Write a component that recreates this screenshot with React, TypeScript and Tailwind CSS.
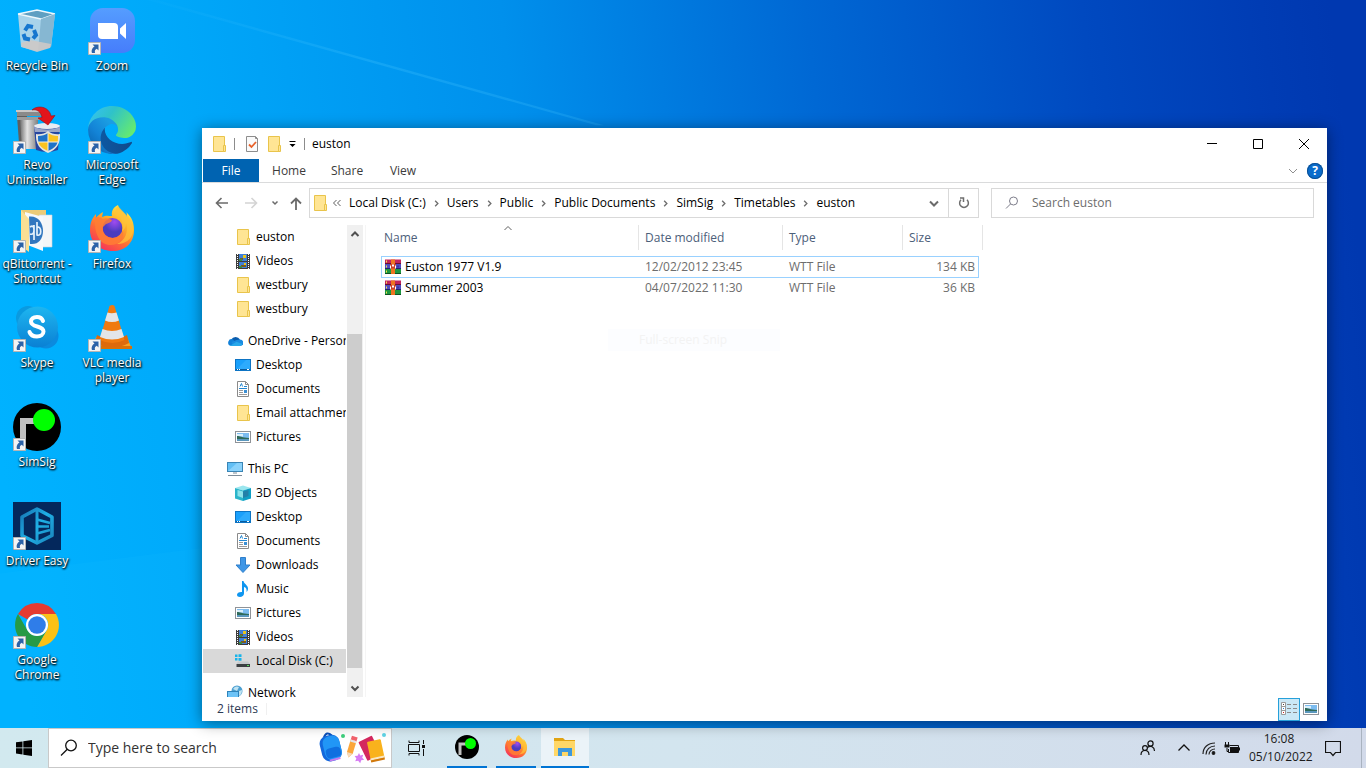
import React, { Fragment, ReactNode } from "react";

/* ---------- shared glyphs ---------- */

function Folder() {
  return (
    <svg viewBox="0 0 16 16" className="size-4 shrink-0">
      <path d="M2.500.5h11v15h-11z" fill="#ffe594" stroke="#e9c44b" />
      <path d="M12.500 9.500h2v6h-2z" fill="#ffe594" stroke="#e9c44b" />
    </svg>
  );
}

function VideoIcon() {
  return (
    <svg viewBox="0 0 16 16" className="size-4 shrink-0">
      <rect x="1" y="1" width="14" height="15" fill="#3c3c3c" />
      <rect x="4" y="1" width="8" height="7" fill="#3f7fd8" />
      <rect x="4" y="9" width="8" height="6" fill="#3f7fd8" />
      <path d="M5 5h3v2H5zM6 12h5v2H6z" fill="#7a5a1e" />
      <path d="M8 2h3v3H8zM9 10h2v2H9z" fill="#e8c51c" />
      <path d="M4 6h3v2H4zM4 13h3v2H4z" fill="#3d8b3d" />
      <path d="M2.500 1v15M13.500 1v15" stroke="#fff" strokeDasharray="1 1" />
    </svg>
  );
}

function CloudIcon() {
  return (
    <svg viewBox="0 0 16 16" className="size-4 shrink-0">
      <path d="M4.200 6.500A5 5 0 0 1 13 6.600L8 11z" fill="#0a5cad" />
      <path d="M3.500 12.800A3.400 3.400 0 1 1 5.800 6.300L12 12.500z" fill="#1180d8" />
      <path d="M6 13 4.500 9 9.500 7 13 6.500A3.200 3.200 0 0 1 13 13z" fill="#1a8be0" />
      <path d="M3 12.800 9.500 8.800 15.400 11A3 3 0 0 1 13 13H3.500z" fill="#28a8ea" />
    </svg>
  );
}

function DesktopIcon() {
  return (
    <svg viewBox="0 0 16 16" className="size-4 shrink-0">
      <rect x=".5" y="2.500" width="15" height="11" fill="#1aa0fb" stroke="#0d74c4" />
      <path d="M1 13 11 3h4v10z" fill="#3bb2ff" opacity=".6" />
      <path d="M1 12.500h14" stroke="#0a5c9e" />
      <path d="M2 12.500h1M4 12.500h1M12 12.500h2" stroke="#fff" />
    </svg>
  );
}

function DocumentIcon() {
  return (
    <svg viewBox="0 0 16 16" className="size-4 shrink-0">
      <path d="M2.500.5h8l3 3v12h-11z" fill="#fff" stroke="#8a8a8a" />
      <path d="M10.500.5v3h3" fill="none" stroke="#8a8a8a" />
      <path d="M5 5.500 6.500 2.500 7.500 5.500M9 5.500h3M4 7.500h8" fill="none" stroke="#2286d0" />
      <path d="M4 9.500h4M4 11.500h4M4 13.500h8" stroke="#9a9a9a" />
      <path d="M9 9h3v3H9z" fill="#3b8fd4" />
    </svg>
  );
}

function PictureIcon() {
  return (
    <svg viewBox="0 0 16 16" className="size-4 shrink-0">
      <rect x=".5" y="2.500" width="15" height="11" fill="#fff" stroke="#8f9398" />
      <rect x="2" y="4" width="12" height="8" fill="#7cbcf0" />
      <path d="M2 5h6v2.500H2z" fill="#d9effb" />
      <path d="M2 7c3 0 5 1.500 12 2v1H2z" fill="#2f6a58" />
      <path d="M2 10h12v2H2z" fill="#5a97bd" />
    </svg>
  );
}

function PcIcon() {
  return (
    <svg viewBox="0 0 16 16" className="size-4 shrink-0">
      <rect x=".5" y="1.500" width="15" height="9" fill="#62bff5" stroke="#3b85b5" />
      <path d="M1 10 10 2h5v8z" fill="#8ad2fb" />
      <path d="M6 12h4" stroke="#7d8c98" />
      <path d="M1 14.500h14" stroke="#7f8d99" />
    </svg>
  );
}

function CubeIcon() {
  return (
    <svg viewBox="0 0 16 16" className="size-4 shrink-0">
      <path d="M0 3 8 .5 16 3 8 5.500z" fill="#9be6ee" />
      <path d="M0 3 8 5.500V16l-8-2.500z" fill="#2bb5ca" />
      <path d="M16 3 8 5.500V16l8-2.500z" fill="#0f9fc4" />
      <path d="M2.500 5 8 6.500V13l-5.500-2z" fill="#8ce3ea" />
      <path d="M8 6.500 13.500 5v6L8 13z" fill="#2380a8" />
    </svg>
  );
}

function DownloadIcon() {
  return (
    <svg viewBox="0 0 16 16" className="size-4 shrink-0">
      <path d="M5.500.5h5v7.500h4.500L8 15.500 1 8h4.500z" fill="#3e96e6" stroke="#2f7fcb" />
    </svg>
  );
}

function MusicIcon() {
  return (
    <svg viewBox="0 0 16 16" className="size-4 shrink-0">
      <path d="M7 0h1.500c.5 3 4.500 4 4.500 7.500 0 1.500-.5 2.500-1.500 3.500.5-3-.5-4.500-2.500-5v6.500C9 14.500 7 16 5 16c-1.800 0-3-1-3-2.300C2 12 4 10.800 7 11z" fill="#0f96f0" />
    </svg>
  );
}

function DiskIcon() {
  return (
    <svg viewBox="0 0 16 16" className="size-4 shrink-0">
      <path d="M0 1.500h2.500V4H0zM3.500 1.200H6.500V4h-3zM0 5h2.500v2.500H0zM3.500 5h3v2.800h-3z" fill="#18b4ea" />
      <path d="M3 8.500h10l2 2.500H1.500z" fill="#c6cacd" />
      <path d="M1.500 11H15v3H1.500z" fill="#3b3f42" />
      <path d="M12 12h2v1h-2z" fill="#54e05a" />
    </svg>
  );
}

function NetworkIcon() {
  return (
    <svg viewBox="0 0 16 16" className="size-4 shrink-0">
      <circle cx="10" cy="6" r="5.500" fill="#4c9fd1" />
      <path d="M6 4c2-3 4-3 6-2l-2 4zM12 6l3-1c0 3-1 5-3 6z" fill="#bfe3f2" />
      <rect x=".5" y="6.500" width="11" height="7" fill="#6cc3f7" stroke="#2e83ba" />
    </svg>
  );
}

function ArchiveIcon() {
  return (
    <svg viewBox="0 0 16 16" className="size-4 shrink-0">
      <path d="M0 .5h16v4.500H0z" fill="#c2245c" />
      <path d="M0 5h16v5H0z" fill="#514cc0" />
      <path d="M0 10h16v5H0z" fill="#1d9640" />
      <path d="M0 4h16v1H0z" fill="#6b1034" />
      <path d="M0 9h16v1H0z" fill="#262270" />
      <path d="M0 14h16v1H0z" fill="#0c5220" />
      <path d="M1 1.500h1v2H1zM1 6.500h1v2H1zM1 11.500h1v2H1z" fill="#f3e04c" />
      <path d="M12.500 6.500h1v2h-1z" fill="#2a2680" />
      <path d="M6 .5h4v14.500H6z" fill="#ee7420" />
      <path d="M5 5h6v4.500H5z" fill="#c9402a" />
      <path d="M5.500 9.500V6.500M10.500 9.500V6.500M7.500 5.500v2M8.500 5.500v2" stroke="#fff" />
    </svg>
  );
}

function Chevron({ d, className }: { d: string; className: string }) {
  return (
    <svg viewBox="0 0 10 10" className={className} fill="none" stroke="currentColor">
      <path d={d} />
    </svg>
  );
}

/* ---------- application logos ---------- */

function RecycleBin() {
  return (
    <svg viewBox="0 0 48 48" className="size-12">
      <path d="M5 7 24 3l18 4-4 33-15 4-15-4z" fill="#a8d3ea" />
      <path d="M5 7 24 3l18 4-14 5z" fill="#5f9fc2" />
      <path d="M5 7 28 12l14-5M5 7 24 3l18 4" fill="none" stroke="#eef8fd" strokeWidth="1.300" />
      <path d="M28 12 42 7l-4 33-13 4z" fill="#86b7d2" />
      <path d="M8 36l9-3 21 4-1 4-13 4-15-5z" fill="#cdc9c6" opacity=".9" />
      <g fill="none" stroke="#1677cf" strokeWidth="4">
        <path d="M12 23.500l3-4.500 5 1" />
        <path d="M21 23l2 5-3 3.500" />
        <path d="M17 32.500l-5-1-1.500-4.500" />
      </g>
    </svg>
  );
}

function ZoomLogo() {
  return (
    <svg viewBox="0 0 48 48" className="size-12">
      <defs>
        <linearGradient id="zm" x2="0" y2="1">
          <stop stopColor="#559dff" />
          <stop offset="1" stopColor="#467dfb" />
        </linearGradient>
      </defs>
      <rect x="2" y="1" width="45" height="45" rx="13" fill="url(#zm)" />
      <path d="M10 16h16a4 4 0 0 1 4 4v12H14a4 4 0 0 1-4-4z" fill="#fff" />
      <path d="M32 21.500 38 16v16l-6-5.500z" fill="#fff" />
    </svg>
  );
}

function RevoLogo() {
  return (
    <svg viewBox="0 0 48 48" className="size-12">
      <defs>
        <linearGradient id="rv">
          <stop stopColor="#6f6f6f" />
          <stop offset=".4" stopColor="#e3e3e3" />
          <stop offset="1" stopColor="#7f7f7f" />
        </linearGradient>
      </defs>
      <path d="M4 5h28l-2 5H4z" fill="#8a8a8a" />
      <path d="M4 10h10v30l-8-3z" fill="#5f5f5f" />
      <path d="M7 13h18v30H9z" fill="url(#rv)" />
      <path d="M3 4h28v2H3z" fill="#c9c9c9" />
      <path d="M4 11h24v3H4z" fill="#9c9c9c" />
      <path d="M21 20h26l-2 24q-11 4-22 0z" fill="#2746a0" />
      <ellipse cx="34" cy="20" rx="13" ry="3" fill="#e8ebf2" />
      <path d="M21 21q13 5 26 0v5H22z" fill="#9aa6c8" />
      <path d="M35 25q5 4 12 3 1 14-12 19-13-5-12-19 7 1 12-3z" fill="#e4e4e0" />
      <path d="M35 27q-4 3-10 3 0 3 .3 6H35z" fill="#1e72c8" />
      <path d="M35 27q4 3 10 3 0 3-.3 6H35z" fill="#fbc31f" />
      <path d="M25.300 36H35v9q-8-3-9.700-9z" fill="#fbc31f" />
      <path d="M44.700 36H35v9q8-3 9.700-9z" fill="#1e72c8" />
      <path d="M35 27v18M25 36h20" stroke="#f1efe4" />
      <path d="M19 4C24-1 36 0 38 10l4-.5L35 19l-10-7 4-.5C28 5 23 3 19 4z" fill="#e3141b" stroke="#a30a0f" strokeWidth=".6" />
    </svg>
  );
}

function EdgeLogo() {
  return (
    <svg viewBox="0 0 256 256" className="size-12">
      <defs>
        <linearGradient id="e1" x1="0" y1="0" x2="1" y2="0">
          <stop stopColor="#0c59a4" />
          <stop offset="1" stopColor="#114a8b" />
        </linearGradient>
        <linearGradient id="e2" x1=".8" y1=".3" x2=".2" y2="1">
          <stop stopColor="#1b9de2" />
          <stop offset=".5" stopColor="#1383d6" />
          <stop offset="1" stopColor="#0a64b0" />
        </linearGradient>
        <linearGradient id="e3" x1="0" y1=".2" x2="1" y2=".7">
          <stop stopColor="#35c1f1" />
          <stop offset=".4" stopColor="#2fc2c9" />
          <stop offset="1" stopColor="#66eb6e" />
        </linearGradient>
      </defs>
      <path d="M231 190.500c-3.400 1.800-6.800 3.400-10.400 4.800a107.900 107.900 0 0 1-37.900 6.800c-49.900 0-93.400-34.300-93.400-78.400a33.400 33.400 0 0 1 17.500-29.100c-45.200 1.900-56.800 49-56.800 76.500 0 77.900 71.800 85.800 87.300 85.800 8.300 0 20.900-2.400 28.400-4.800l1.400-.5a128.600 128.600 0 0 0 66.900-52.900c2-3.500-.5-8-3-8.200z" fill="url(#e1)" />
      <path d="M105.700 241.400a79.200 79.200 0 0 1-22.700-21.300 80.700 80.700 0 0 1 29.700-120.600c3.100-1.500 8.400-4.100 15.500-4a32.400 32.400 0 0 1 25.700 13 31.900 31.900 0 0 1 6.300 18.700c0-.2 24.500-79.600-80-79.600C36.300 47.600.2 89.300.2 125.800a130.200 130.200 0 0 0 12.100 56 128.200 128.200 0 0 0 156.400 67 75.600 75.600 0 0 1-63-7.400z" fill="url(#e2)" />
      <path d="M152.300 148.900c-.8 1-3.300 2.500-3.300 5.600 0 2.600 1.700 5.200 4.700 7.300 14.400 10 41.500 8.600 41.600 8.600 10.600 0 21-2.800 30.200-8.300a61.400 61.400 0 0 0 30.400-52.800c.3-22.500-8-37.400-11.400-44C223.300 23.700 177.400 0 128.300 0 58.400 0 1.300 56.100.3 126c.5-36.500 36.800-66 80-66 3.500 0 23.500.3 42 10 16.300 8.600 24.900 19 30.900 29.300 6.100 10.600 7.200 24 7.200 29.400s-2.700 13.400-8.100 20.200z" fill="url(#e3)" />
    </svg>
  );
}

function QbitLogo() {
  return (
    <svg viewBox="0 0 48 48" className="size-12">
      <path d="M8 5h25v34H8z" fill="#eccb78" />
      <path d="M26 10h13v32H26z" fill="#f4f6f8" stroke="#ccd3da" strokeWidth=".6" />
      <path d="M12 7l18 5v34l-18-7z" fill="#f7f9fb" />
      <path d="M16 11.500c9-1 14 6 14 14.500s-5 14-13 13z" fill="#3277bf" />
      <path d="M17 22c3-2 4 0 4 3s-1 5-4 4M21 20v15M24 17v13c5 2 5-9 0-8" fill="none" stroke="#e6f1fb" strokeWidth="1.700" />
      <path d="M8 5l8 9v33l-8-6z" fill="#fbdf94" />
    </svg>
  );
}

function FirefoxLogo({ className }: { className: string }) {
  return (
    <svg viewBox="0 0 48 48" className={className}>
      <defs>
        <linearGradient id="f1" x1=".8" y1="0" x2=".2" y2="1">
          <stop stopColor="#fff04f" />
          <stop offset=".35" stopColor="#ffb028" />
          <stop offset=".65" stopColor="#ff6a36" />
          <stop offset="1" stopColor="#f22c62" />
        </linearGradient>
        <radialGradient id="f2" cx=".6" cy=".2">
          <stop stopColor="#a04bf0" />
          <stop offset="1" stopColor="#4a3cc0" />
        </radialGradient>
      </defs>
      <path d="M30 0c1 5 6 7 9 12 0-2 0-4-1-5 6 5 8 11 8 18 0 13-9 21-21 21C11 46 2 37 2 25c0-7 2-12 6-16v4c2-3 4-4 7-6l-1 5c4-2 7-1 10-1-1-4 1-9 6-11z" fill="url(#f1)" />
      <circle cx="24.500" cy="23" r="10" fill="url(#f2)" />
      <path d="M7 12c3 0 5 0 8 2 4-2 7 0 9 1-1 3-4 3-6 4l-3 3c-1 7 4 11 10 11 5 0 8-3 10-7 1 9-5 14-12 14C12 40 6 30 7 12z" fill="#ff7d35" opacity=".85" />
      <path d="M27 8c6 4 9 9 7 18 3-2 4-4 4-8 3 8-1 18-9 21 11 0 18-8 16-19C42 12 37 9 30 1c-2 2-3 5-3 7z" fill="#ffc23a" opacity=".75" />
    </svg>
  );
}

function SkypeLogo() {
  return (
    <svg viewBox="0 0 48 48" className="size-12">
      <defs>
        <linearGradient id="s1" x2="0" y2="1">
          <stop stopColor="#1eb6f0" />
          <stop offset="1" stopColor="#0a80d4" />
        </linearGradient>
      </defs>
      <circle cx="15" cy="14" r="12" fill="#0a9ae0" />
      <circle cx="33" cy="32" r="12.500" fill="#0b8ade" />
      <circle cx="24.500" cy="23" r="20.500" fill="url(#s1)" />
      <path d="M30 17c-1-3-3-4-6-4-4 0-6 2-6 4.500 0 6.500 12.500 3.500 12.500 10 0 3-3 5-6.500 5s-6.500-1.500-7.500-4.500" fill="none" stroke="#fff" strokeWidth="4" strokeLinecap="round" />
    </svg>
  );
}

function VlcLogo() {
  return (
    <svg viewBox="0 0 48 48" className="size-12">
      <path d="M8 33h31l5 12H5z" fill="#f7a024" />
      <path d="M4 42h40v3H4z" fill="#d97208" />
      <path d="M9 31q15 8 30 0l2 8q-17 9-34 0z" fill="#dd6a0c" />
      <path d="M21.500 2q3-2 5 0l10 34q-12 6-25 0z" fill="#f07a10" />
      <path d="M19.500 8.500q4 1.500 9 0l2.500 8q-7 3-14 0z" fill="#e3e5e8" />
      <path d="M14.500 25q9.500 4 19 0l2.500 8q-12 5-24 0z" fill="#e3e5e8" />
    </svg>
  );
}

function SimSigLogo({ className }: { className: string }) {
  return (
    <svg viewBox="0 0 48 48" className={className}>
      <circle cx="24" cy="24" r="24" fill="#000" />
      <path d="M7 40V15h16v6H13v19z" fill="#c0c0c0" />
      <circle cx="31" cy="17" r="11" fill="#00ff00" />
    </svg>
  );
}

function DriverEasyLogo() {
  return (
    <svg viewBox="0 0 48 48" className="size-12">
      <defs>
        <linearGradient id="d1" gradientUnits="userSpaceOnUse" x1="7" y1="10" x2="41" y2="38">
          <stop stopColor="#1677b4" />
          <stop offset=".5" stopColor="#1fb0e6" />
          <stop offset="1" stopColor="#1a86bd" />
        </linearGradient>
      </defs>
      <path d="M0 0h48v48H0z" fill="#04285c" />
      <g fill="none" stroke="url(#d1)" strokeLinejoin="round">
        <path d="M24 7 39 15v18.500L24 41 9 33.500V15z" strokeWidth="3.600" />
        <path d="M24 7v34" strokeWidth="3" />
        <path d="M24 17.500 37 21M24 24.500h12M24 31.500 37 28" strokeWidth="2.400" />
      </g>
    </svg>
  );
}

function ChromeLogo() {
  return (
    <svg viewBox="0 0 48 48" className="size-12">
      <path d="M24 2a22 22 0 0 1 19 11H24A11 11 0 0 0 14.500 18.500L5 13A22 22 0 0 1 24 2z" fill="#e63b30" />
      <path d="M43 13a22 22 0 0 1-19 33l9.500-16.500A11 11 0 0 0 33.500 18 11 11 0 0 0 24 13z" fill="#fbc116" />
      <path d="M5 13l9.500 16.500A11 11 0 0 0 33.500 29.500L24 46A22 22 0 0 1 5 13z" fill="#269a46" />
      <circle cx="24" cy="24" r="11" fill="#fff" />
      <circle cx="24" cy="24" r="8.800" fill="#2f7de9" />
    </svg>
  );
}

/* ---------- desktop ---------- */

type Shortcut = { label: string; icon: ReactNode; link?: boolean };

const shortcuts: Shortcut[] = [
  { label: "Recycle Bin", icon: <RecycleBin /> },
  { label: "Revo Uninstaller", icon: <RevoLogo />, link: true },
  { label: "qBittorrent - Shortcut", icon: <QbitLogo />, link: true },
  { label: "Skype", icon: <SkypeLogo />, link: true },
  { label: "SimSig", icon: <SimSigLogo className="size-12" />, link: true },
  { label: "Driver Easy", icon: <DriverEasyLogo />, link: true },
  { label: "Google Chrome", icon: <ChromeLogo />, link: true },
  { label: "Zoom", icon: <ZoomLogo />, link: true },
  { label: "Microsoft Edge", icon: <EdgeLogo />, link: true },
  { label: "Firefox", icon: <FirefoxLogo className="size-12" />, link: true },
  { label: "VLC media player", icon: <VlcLogo />, link: true },
];

function DesktopIcons() {
  return (
    <div className="grid w-fit grid-flow-col auto-cols-[74px] grid-rows-[repeat(7,99px)] gap-x-px pt-[7px]">
      {shortcuts.map((s) => (
        <button key={s.label} className="flex flex-col items-center">
          <span className="relative">
            {s.icon}
            {s.link && (
              <svg viewBox="0 0 13 13" className="absolute bottom-0 left-0 size-[13px]">
                <path d="M.5.5h12v12H.5z" fill="#f4f4f4" stroke="#b5b5b5" />
                <path d="M4.500 2.500h6V8.500L8.800 6.800C7 7.500 6.500 9 7 11H4C3 8.500 4.500 5.500 6.500 4.500z" fill="#2b62a8" />
              </svg>
            )}
          </span>
          <span className="mt-[3px] w-[74px] text-center text-xs leading-[15px] text-white [text-shadow:1px_1px_2px_#000,0_1px_2px_#000]">
            {s.label}
          </span>
        </button>
      ))}
    </div>
  );
}

function Wallpaper() {
  return (
    <svg viewBox="0 0 1366 768" preserveAspectRatio="none" className="absolute inset-0 size-full">
      <defs>
        <linearGradient id="w1" gradientUnits="userSpaceOnUse" x1="0" y1="480" x2="1366" y2="330">
          <stop stopColor="#00b2ff" />
          <stop offset=".15" stopColor="#00a9fa" />
          <stop offset=".4" stopColor="#0090ec" />
          <stop offset=".62" stopColor="#0068d4" />
          <stop offset=".82" stopColor="#0049c0" />
          <stop offset=".95" stopColor="#003cb4" />
          <stop offset="1" stopColor="#0038b0" />
        </linearGradient>
        <linearGradient id="w2">
          <stop stopColor="#4cc8ff" stopOpacity="0" />
          <stop offset=".5" stopColor="#4cc8ff" stopOpacity=".25" />
          <stop offset="1" stopColor="#4cc8ff" stopOpacity=".2" />
        </linearGradient>
      </defs>
      <path d="M0 0h1366v768H0z" fill="url(#w1)" />
      <path d="M130 -8 604 132 596 132 120 -8z" fill="url(#w2)" />
      <path d="M0 605 202 578V728H0z" fill="#20c4ff" opacity=".1" />
    </svg>
  );
}

/* ---------- explorer window ---------- */

type Node = { label: string; icon: ReactNode; root?: boolean; selected?: boolean };

const tree: Node[][] = [
  [
    { label: "euston", icon: <Folder /> },
    { label: "Videos", icon: <VideoIcon /> },
    { label: "westbury", icon: <Folder /> },
    { label: "westbury", icon: <Folder /> },
  ],
  [
    { label: "OneDrive - Personal", icon: <CloudIcon />, root: true },
    { label: "Desktop", icon: <DesktopIcon /> },
    { label: "Documents", icon: <DocumentIcon /> },
    { label: "Email attachments", icon: <Folder /> },
    { label: "Pictures", icon: <PictureIcon /> },
  ],
  [
    { label: "This PC", icon: <PcIcon />, root: true },
    { label: "3D Objects", icon: <CubeIcon /> },
    { label: "Desktop", icon: <DesktopIcon /> },
    { label: "Documents", icon: <DocumentIcon /> },
    { label: "Downloads", icon: <DownloadIcon /> },
    { label: "Music", icon: <MusicIcon /> },
    { label: "Pictures", icon: <PictureIcon /> },
    { label: "Videos", icon: <VideoIcon /> },
    { label: "Local Disk (C:)", icon: <DiskIcon />, selected: true },
  ],
  [{ label: "Network", icon: <NetworkIcon />, root: true }],
];

const crumbs = ["Local Disk (C:)", "Users", "Public", "Public Documents", "SimSig", "Timetables", "euston"];

const files = [
  { name: "Euston 1977 V1.9", date: "12/02/2012 23:45", type: "WTT File", size: "134 KB", focused: true },
  { name: "Summer 2003", date: "04/07/2022 11:30", type: "WTT File", size: "36 KB", focused: false },
];

function TitleBar() {
  return (
    <header className="flex h-[31px] shrink-0 items-center pl-[9px]">
      <Folder />
      <span className="ml-[7px] h-3 w-px bg-[#8c8c8c]" />
      <button aria-label="Properties" className="ml-[9px]">
        <svg viewBox="0 0 16 16" className="size-4">
          <path d="M2.500.5h9l2 2v13h-11z" fill="#fafafa" stroke="#8d8d8d" />
          <path d="M11.500.5v2h2" fill="none" stroke="#8d8d8d" />
          <path d="M5 8.500 7.500 11 12 6" fill="none" stroke="#e8622a" strokeWidth="1.800" />
        </svg>
      </button>
      <button aria-label="New folder" className="ml-1.5">
        <Folder />
      </button>
      <button aria-label="Customise toolbar" className="ml-[7px]">
        <svg viewBox="0 0 8 8" className="size-2">
          <path d="M.5 1h6v1h-6zM.5 4h6L3.500 7z" />
        </svg>
      </button>
      <span className="ml-[7px] h-3 w-px bg-[#8c8c8c]" />
      <h1 className="ml-[7px] flex-1">euston</h1>
      <button aria-label="Minimise" className="flex h-full w-[46px] items-center justify-center">
        <svg viewBox="0 0 10 10" className="size-[10px]">
          <path d="M0 4.500h10" stroke="#000" />
        </svg>
      </button>
      <button aria-label="Maximise" className="flex h-full w-[46px] items-center justify-center">
        <svg viewBox="0 0 10 10" className="size-[10px]">
          <path d="M.5.5h9v9h-9z" fill="none" stroke="#000" />
        </svg>
      </button>
      <button aria-label="Close" className="flex h-full w-[46px] items-center justify-center">
        <svg viewBox="0 0 10 10" className="size-[10px]">
          <path d="M0 0l10 10M10 0 0 10" stroke="#000" />
        </svg>
      </button>
    </header>
  );
}

function Ribbon() {
  return (
    <nav className="flex h-6 shrink-0 items-stretch border-b border-[#dadbdc] pr-1 pl-px text-[#3b3b3b]">
      <button className="w-14 bg-[#0063b1] text-white">File</button>
      <button className="w-[60px]">Home</button>
      <button className="w-[56px]">Share</button>
      <button className="w-[56px]">View</button>
      <span className="flex-1" />
      <button aria-label="Expand ribbon" className="mr-[9px] text-[#8f8f8f]">
        <Chevron d="M1 3l4 4 4-4" className="size-[10px]" />
      </button>
      <button
        aria-label="Help"
        className="my-auto flex size-4 items-center justify-center rounded-full bg-[#0a6ccc] text-xs font-bold text-white ring-1 ring-[#0b4f94] ring-inset"
      >
        ?
      </button>
    </nav>
  );
}

function AddressRow() {
  return (
    <div className="flex h-[42px] shrink-0 items-center pr-[13px] pb-[2px]">
      <div className="flex w-[107px] items-center text-[#6b6b6b]">
        <button aria-label="Back" className="ml-[13px]">
          <svg viewBox="0 0 14 14" className="size-[14px]" fill="none" stroke="currentColor" strokeWidth="1.600">
            <path d="M13 7H1.500M6.500 2l-5 5 5 5" />
          </svg>
        </button>
        <button aria-label="Forward" className="ml-[15px] text-[#d4d4d4]">
          <svg viewBox="0 0 14 14" className="size-[14px]" fill="none" stroke="currentColor" strokeWidth="1.600">
            <path d="M1 7h11.500M7.500 2l5 5-5 5" />
          </svg>
        </button>
        <button aria-label="Recent locations" className="ml-3">
          <Chevron d="M2.500 3.500 5 6l2.500-2.500" className="size-[10px] stroke-[1.500]" />
        </button>
        <button aria-label="Up" className="ml-[9px]">
          <svg viewBox="0 0 14 14" className="size-[14px]" fill="none" stroke="currentColor" strokeWidth="1.800">
            <path d="M7 14V2.500M2 7.500l5-5 5 5" />
          </svg>
        </button>
      </div>
      <div className="flex h-[30px] min-w-0 flex-1 border border-[#d9d9d9]">
        <div className="flex min-w-0 flex-1 items-center pl-[2px]">
          <Folder />
          <svg viewBox="0 0 10 10" className="mr-px ml-1 size-[10px]" fill="none" stroke="#5e5e5e">
            <path d="M4.500 2 1.500 5l3 3M8.500 2l-3 3 3 3" />
          </svg>
          {crumbs.map((c, i) => (
            <Fragment key={c}>
              {i > 0 && <Chevron d="M3.500 2l3 3-3 3" className="size-[9px] shrink-0 stroke-[1.500] text-[#6e6e6e]" />}
              <button className="shrink-0 px-1.5">{c}</button>
            </Fragment>
          ))}
        </div>
        <button aria-label="Previous locations" className="w-[29px] text-[#6b6b6b]">
          <Chevron d="M1 3.500l4 4 4-4" className="mx-auto size-[10px] stroke-2" />
        </button>
        <button aria-label="Refresh" className="w-[30px] border-l border-[#d9d9d9]">
          <svg viewBox="0 0 12 12" className="mx-auto size-3" fill="none" stroke="#6e6e6e" strokeWidth="1.500">
            <path d="M3 2.800A4.400 4.400 0 1 0 9 2.800M2 1h3.500v4" />
          </svg>
        </button>
      </div>
      <label className="ml-3 flex h-[30px] w-[323px] items-center border border-[#d9d9d9] pl-[13px]">
        <svg viewBox="0 0 14 14" className="size-[14px]" fill="none" stroke="#7d7d8a">
          <circle cx="8.500" cy="5" r="4" />
          <path d="M5.500 8 1 12.500" />
        </svg>
        <input
          type="text"
          aria-label="Search euston"
          placeholder="Search euston"
          className="ml-[13px] min-w-0 flex-1 outline-none placeholder:text-[#6d6d6d]"
        />
      </label>
    </div>
  );
}

function Sidebar() {
  return (
    <aside className="flex w-[164px] shrink-0 border-r border-[#f5f5f5] pl-px">
      <nav className="flex w-[143px] flex-col gap-2 overflow-hidden">
        {tree.map((group, i) => (
          <ul key={i} className="shrink-0">
            {group.map((n, j) => (
              <li key={j} className={n.selected ? "bg-[#d9d9d9]" : ""}>
                <a
                  href="#"
                  className={`flex h-6 items-center gap-[5px] overflow-hidden whitespace-nowrap ${n.root ? "pl-6" : "pl-8"}`}
                >
                  {n.icon}
                  {n.label}
                </a>
              </li>
            ))}
          </ul>
        ))}
      </nav>
      <div className="ml-px flex w-4 flex-col bg-[#f0f0f0] text-[#505050]">
        <button aria-label="Scroll up" className="flex h-[18px] w-[15px] items-center justify-center">
          <Chevron d="M1.500 7 5 3.500 8.500 7" className="size-[10px] stroke-2" />
        </button>
        <div className="flex-[91]" />
        <div className="w-[15px] flex-[334] bg-[#cdcdcd]" />
        <div className="flex-[11]" />
        <button aria-label="Scroll down" className="flex h-[18px] w-[15px] items-center justify-center">
          <Chevron d="M1.500 3.500 5 7l3.500-3.500" className="size-[10px] stroke-2" />
        </button>
      </div>
    </aside>
  );
}

function FileTable() {
  const head = "h-[25px] border-r border-[#e5e5e5] p-0 pl-1.5 text-left font-normal";
  return (
    <main className="relative min-w-0 flex-1 pl-[15px]">
      <table className="w-[602px] table-fixed border-separate border-spacing-0 text-[#6d6d6d]">
        <colgroup>
          <col className="w-[258px]" />
          <col className="w-[144px]" />
          <col className="w-[120px]" />
          <col className="w-[76px]" />
          <col className="w-1" />
        </colgroup>
        <thead className="text-[#4c607a]">
          <tr>
            <th className="relative h-[25px] border-r border-[#e5e5e5] p-0 pl-[3px] text-left font-normal">
              <Chevron d="M1.500 5 5 1.500 8.500 5" className="absolute top-0 left-[122px] size-[10px] text-[#606060]" />
              Name
            </th>
            <th className={head}>Date modified</th>
            <th className={head}>Type</th>
            <th className="h-[25px] p-0 pl-1.5 text-left font-normal">Size</th>
            <th className="border-r border-[#e5e5e5] p-0" />
          </tr>
          <tr className="h-1.5" />
        </thead>
        <tbody>
          {files.map((f) => {
            const edge = f.focused ? "h-[22px] border-y border-[#99d1ff]" : "h-5 border-x-transparent";
            return (
              <tr key={f.name}>
                <td className={`${edge} border-l p-0 text-black`}>
                  <span className="flex items-center gap-1 pl-[3px]">
                    <ArchiveIcon />
                    {f.name}
                  </span>
                </td>
                <td className={`${edge} p-0 pl-1.5`}>{f.date}</td>
                <td className={`${edge} p-0 pl-1.5`}>{f.type}</td>
                <td className={`${edge} border-r p-0 pr-[3px] text-right`}>{f.size}</td>
                <td className="p-0" />
              </tr>
            );
          })}
        </tbody>
      </table>
      <div className="absolute top-[104px] left-[242px] h-[22px] w-[172px] bg-[#fcfdff] pl-[31px] leading-[22px] text-[#f3f3f3]">
        Full-screen Snip
      </div>
    </main>
  );
}

function StatusBar() {
  return (
    <footer className="flex h-6 shrink-0 items-center pr-2 pl-[15px] text-[#2c3a55]">
      <span>2 items</span>
      <span className="ml-2 h-3 w-px bg-[#f0f0f0]" />
      <span className="flex-1" />
      <button aria-label="Details view" className="mr-[3px] flex h-[23px] w-[22px] items-center justify-center border border-[#26a0da] bg-[#cbe8f6]">
        <svg viewBox="0 0 16 14" className="h-[14px] w-4">
          <path d="M.5.5h4v12h-4zM.5 4.500h4M.5 8.500h4" fill="#fff" stroke="#9a9a9a" />
          <path d="M6 2.500h4M12 2.500h4M6 6.500h4M12 6.500h4M6 10.500h4M12 10.500h4" stroke="#8b8b8b" />
          <path d="M2 2h1v1H2z" fill="#444" />
          <path d="M2 6h1v1H2z" fill="#2d7bd0" />
          <path d="M2 10h1v1H2z" fill="#c22" />
        </svg>
      </button>
      <button aria-label="Large icons view">
        <PictureIcon />
      </button>
    </footer>
  );
}

function Explorer() {
  return (
    <section className="absolute top-[128px] right-[39px] bottom-[7px] left-[202px] flex flex-col bg-white text-xs text-black shadow-[0_2px_14px_rgba(0,0,0,0.45)]">
      <TitleBar />
      <Ribbon />
      <AddressRow />
      <div className="flex min-h-0 flex-1">
        <Sidebar />
        <FileTable />
      </div>
      <StatusBar />
    </section>
  );
}

/* ---------- taskbar ---------- */

function SearchArt() {
  return (
    <svg viewBox="0 0 68 34" className="h-[34px] w-[68px] shrink-0">
      <g transform="rotate(-14 12 18)">
        <path d="M8 5q4-6 8 0" fill="none" stroke="#0b4fb8" strokeWidth="2" />
        <rect x="2" y="4" width="20" height="26" rx="8" fill="#1368dc" />
        <rect x="5" y="5" width="17" height="24" rx="7" fill="#2196f6" />
        <rect x="6" y="17" width="15" height="10" rx="4" fill="#0f6fe0" />
        <path d="M8 29h11" stroke="#c77af0" strokeWidth="2" />
      </g>
      <circle cx="24" cy="5" r="2" fill="#3ecf7c" />
      <g transform="rotate(17 32 18)">
        <path d="M29 9h6v13l-3 5-3-5z" fill="#fba63a" />
        <path d="M29 5h6v4h-6z" fill="#f2626c" />
        <path d="M29 22h6l-3 5z" fill="#f6d9ba" />
        <path d="M29 9h6v2h-6z" fill="#e3e3ea" />
      </g>
      <path d="M40 22l1.200 2.600 3-.8-1 3 2 2-3 .4-1 3-2-2.500-3 .5 1.200-2.800-1.800-2.500 3-.1z" fill="#d77bf3" />
      <g transform="rotate(-26 50 17)">
        <rect x="43" y="7" width="15" height="21" rx="1" fill="#d4285e" />
      </g>
      <g transform="rotate(-12 58 20)">
        <rect x="50" y="9" width="14" height="20" rx="1" fill="#f9b21c" />
        <path d="M50 26h14v2H50z" fill="#f8e6c6" />
        <path d="M50 28h14v2H50z" fill="#d1780c" />
      </g>
      <circle cx="65" cy="4" r="2" fill="#5fd4e6" />
    </svg>
  );
}

function ExplorerLogo() {
  return (
    <svg viewBox="0 0 24 24" className="size-6">
      <path d="M1 3h9l2 2h10v16H1z" fill="#e2a414" />
      <path d="M1 6h21v15H1z" fill="#ffd767" />
      <path d="M5 13h14v8h-4v-4H9v4H5z" fill="#3d98dc" />
    </svg>
  );
}

function TaskApp({ label, active, children }: { label: string; active?: boolean; children: ReactNode }) {
  return (
    <button
      aria-label={label}
      className={`ml-px flex h-full w-12 flex-col items-center ${active ? "bg-[#ebf3f8]" : ""}`}
    >
      <span className="flex flex-1 items-center">{children}</span>
      <span className={`h-[2px] bg-[#0074d4] ${active ? "w-full" : "w-10"}`} />
    </button>
  );
}

function Taskbar() {
  return (
    <footer className="flex h-10 shrink-0 items-center bg-linear-to-r from-[#d2e9ef] via-[#d3e5ef] to-[#d2daea] text-[#1c1c1c]">
      <button aria-label="Start" className="flex h-full w-12 items-center justify-center">
        <svg viewBox="0 0 16 16" className="size-4">
          <path d="M0 2.300 6.500 1.400v6.100H0zM7.300 1.300 16 0v7.500H7.300zM0 8.300h6.500v6.200L0 13.600zM7.300 8.300H16V16l-8.700-1.300z" />
        </svg>
      </button>
      <label className="flex h-full w-[344px] items-center border border-[#c9c9c9] bg-white pr-1 pl-[11px]">
        <svg viewBox="0 0 18 18" className="size-[18px] shrink-0" fill="none" stroke="#111" strokeWidth="1.300">
          <circle cx="11" cy="6.500" r="5.300" />
          <path d="M7.300 10.300 1 16.500" />
        </svg>
        <input
          type="text"
          aria-label="Type here to search"
          placeholder="Type here to search"
          className="ml-[10px] min-w-0 flex-1 text-sm outline-none placeholder:text-[#333]"
        />
        <SearchArt />
      </label>
      <button aria-label="Task view" className="flex h-full w-[50px] items-center justify-center">
        <svg viewBox="0 0 18 16" className="h-4 w-[18px]" fill="none" stroke="#111">
          <path d="M1 .5v2h10v-2M1 15.500v-2h10v2M.5 4.500h11v7H.5zM15.500 0v4M15.500 9v7" />
          <path d="M14 5h3v3h-3z" fill="#111" stroke="none" />
        </svg>
      </button>
      <TaskApp label="SimSig">
        <SimSigLogo className="size-6" />
      </TaskApp>
      <TaskApp label="Firefox">
        <FirefoxLogo className="size-6" />
      </TaskApp>
      <TaskApp label="File Explorer" active>
        <ExplorerLogo />
      </TaskApp>
      <span className="flex-1" />
      <button aria-label="People" className="mr-[22px]">
        <svg viewBox="0 0 16 16" className="size-4" fill="none" stroke="#111" strokeWidth="1.200">
          <circle cx="10.500" cy="3.500" r="2.600" />
          <circle cx="5" cy="8" r="2.400" />
          <path d="M1 15c0-6 8-6 8 0M7.500 7.500c3-2.500 7-.5 7 3.500" />
        </svg>
      </button>
      <button aria-label="Show hidden icons" className="mr-[12px]">
        <svg viewBox="0 0 12 12" className="size-3" fill="none" stroke="#111" strokeWidth="1.300">
          <path d="M.5 8.500 6 3l5.500 5.500" />
        </svg>
      </button>
      <button aria-label="Wi-Fi" className="mr-2">
        <svg viewBox="0 0 14 14" className="size-[14px]" fill="none" stroke="#222" strokeWidth="1.200">
          <path d="M1 13C1 6.500 6 2 13 2M4 13.500C4 8.500 8 5 13 5M7 13.500C7 10.500 9.500 8 13 8" />
          <circle cx="11.500" cy="12" r="1.300" fill="#111" />
        </svg>
      </button>
      <button aria-label="Battery" className="mr-2">
        <svg viewBox="0 0 17 14" className="h-[14px] w-[17px]" fill="none" stroke="#111">
          <path d="M5.500 4.500h9v7H4.500V8M15.500 6.500v3" />
          <path d="M6 6h8v5H6z" fill="#111" stroke="none" />
          <path d="M1.500 1v3M4.500 1v3M3 7v3.500h2" />
          <path d="M.5 3.500h5v3h-5z" fill="#111" stroke="none" />
        </svg>
      </button>
      <time className="w-[60px] text-center text-xs leading-[18px] whitespace-nowrap">
        16:08
        <br />
        05/10/2022
      </time>
      <button aria-label="Notifications" className="mr-5 ml-4">
        <svg viewBox="0 0 16 17" className="h-[17px] w-4" fill="none" stroke="#111" strokeWidth="1.200">
          <path d="M.5 1.500h15v11h-5L8 15.500 5.500 12.500h-5z" />
        </svg>
      </button>
      <span className="mr-1 h-full w-px bg-[#a9b3c0]" />
    </footer>
  );
}

export default function App() {
  return (
    <div className="flex h-screen flex-col overflow-hidden font-['Open_Sans','Noto_Sans',sans-serif]">
      <div className="relative min-h-0 flex-1">
        <Wallpaper />
        <div className="relative">
          <DesktopIcons />
        </div>
        <Explorer />
      </div>
      <Taskbar />
    </div>
  );
}
